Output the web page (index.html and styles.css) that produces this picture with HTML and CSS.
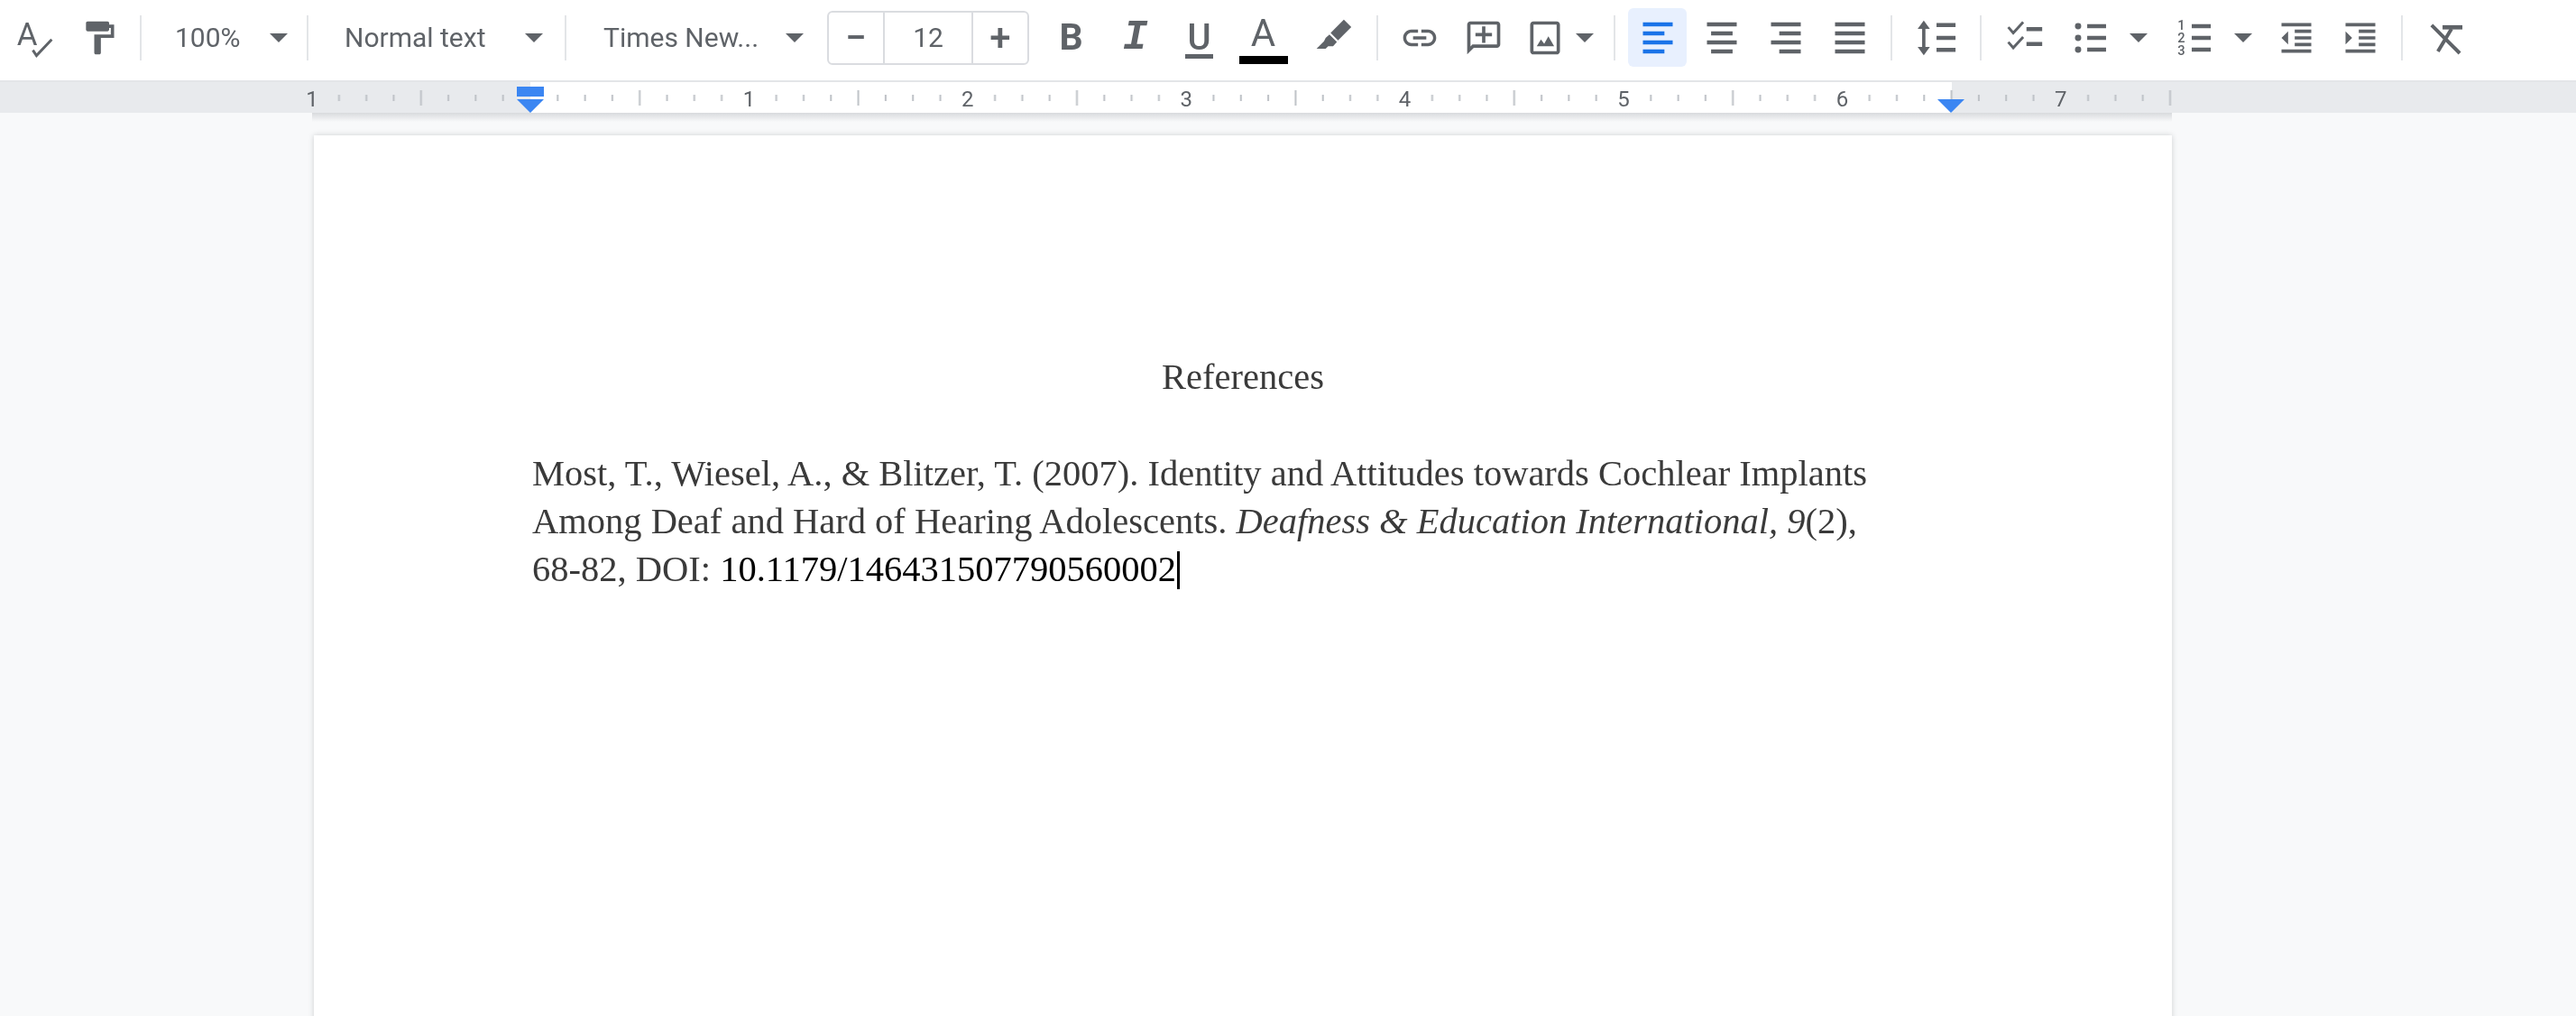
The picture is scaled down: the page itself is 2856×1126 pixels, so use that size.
FILE: index.html
```html
<!DOCTYPE html>
<html lang="en">
<head>
    <meta charset="UTF-8">
    <title>References - Docs</title>
    <link rel="stylesheet" href="styles.css">
</head>
<body>
    <div class="toolbar">
        <div class="btn btn-first">
            <svg class="icon" viewBox="0 0 24 24"><text class="spell-a" x="1" y="16.6">A</text><path class="line line-thin" d="M10.6 19.4l2.2 3.3L22 12.9"/></svg>
        </div>
        <div class="btn">
            <svg class="icon" viewBox="0 0 24 24"><path d="M18 4V3c0-.55-.45-1-1-1H5c-.55 0-1 .45-1 1v4c0 .55.45 1 1 1h12c.55 0 1-.45 1-1V6h1v4H9v11c0 .55.45 1 1 1h2c.55 0 1-.45 1-1v-9h8V4h-3z"/></svg>
        </div>
        <div class="sep ml-10"></div>

        <div class="select select-zoom"><span>100%</span><i class="caret"></i></div>
        <div class="sep"></div>
        <div class="select select-style"><span>Normal text</span><i class="caret"></i></div>
        <div class="sep"></div>
        <div class="select select-font"><span>Times New...</span><i class="caret"></i></div>

        <div class="stepper">
            <div class="step">&minus;</div>
            <div class="step-value">12</div>
            <div class="step">+</div>
        </div>

        <div class="btn ml-11 letter letter-b">B</div>
        <div class="btn letter letter-i">I</div>
        <div class="btn letter letter-u"><span>U</span><b class="u-bar"></b></div>
        <div class="btn letter letter-a"><span>A</span><b class="a-bar"></b></div>
        <div class="btn ml-6">
            <svg class="icon" viewBox="0 0 24 24"><path d="M18.5 1L23 5.5 15 13.5 10.5 9zM9.8 10l4.5 4.5-2.3 2.5H9l-1.5 1.5H2L6.5 14l1-2z"/></svg>
        </div>
        <div class="sep ml-13"></div>

        <div class="btn ml-10">
            <svg class="icon" viewBox="0 0 24 24"><path d="M3.9 12c0-1.71 1.39-3.1 3.1-3.1h4V7H7c-2.76 0-5 2.24-5 5s2.24 5 5 5h4v-1.9H7c-1.71 0-3.1-1.39-3.1-3.1zM8 13h8v-2H8v2zm9-6h-4v1.9h4c1.71 0 3.1 1.39 3.1 3.1s-1.39 3.1-3.1 3.1h-4V17h4c2.76 0 5-2.24 5-5s-2.24-5-5-5z"/></svg>
        </div>
        <div class="btn">
            <svg class="icon" viewBox="0 0 24 24"><g transform="matrix(-1 0 0 1 24 0)"><path d="M22 4c0-1.1-.9-2-2-2H4c-1.1 0-2 .9-2 2v12c0 1.1.9 2 2 2h14l4 4V4zm-2 13.17L18.83 16H4V4h16v13.17z"/></g><path d="M13 5h-2v4H7v2h4v4h2v-4h4V9h-4z"/></svg>
        </div>
        <div class="btn btn-image">
            <svg class="icon" viewBox="0 0 24 24"><path d="M19 4v16H5V4h14m0-2H5c-1.1 0-2 .9-2 2v16c0 1.1.9 2 2 2h14c1.1 0 2-.9 2-2V4c0-1.1-.9-2-2-2z"/><path d="M7 17l2.5-4 2 2.5 2.5-4.5 3.5 6z"/></svg>
        </div>
        <div class="btn-caret"><i class="caret"></i></div>
        <div class="sep ml-20"></div>

        <div class="btn btn-active ml-14">
            <svg class="icon icon-blue" viewBox="0 0 24 24"><path d="M3 2.6h18V5H3zM3 8.1h13v2.4H3zM3 13.5h18v2.4H3zM3 19h13v2.4H3z"/></svg>
        </div>
        <div class="btn ml-3">
            <svg class="icon" viewBox="0 0 24 24"><path d="M3 2.6h18V5H3zM5.5 8.1h13v2.4h-13zM3 13.5h18v2.4H3zM5.5 19h13v2.4h-13z"/></svg>
        </div>
        <div class="btn">
            <svg class="icon" viewBox="0 0 24 24"><path d="M3 2.6h18V5H3zM8 8.1h13v2.4H8zM3 13.5h18v2.4H3zM8 19h13v2.4H8z"/></svg>
        </div>
        <div class="btn">
            <svg class="icon" viewBox="0 0 24 24"><path d="M3 2.6h18V5H3zM3 8.1h18v2.4H3zM3 13.5h18v2.4H3zM3 19h18v2.4H3z"/></svg>
        </div>
        <div class="sep ml-10"></div>

        <div class="btn ml-13">
            <svg class="icon" viewBox="0 0 24 24"><path d="M5.3 6.5H8L4.3 1.5.6 6.5h2.7v11H.6l3.7 5 3.7-5H5.3zM12 3h11.5v2.4H12zM12 10.8h11.5v2.4H12zM12 18h11.5v2.4H12z"/></svg>
        </div>
        <div class="sep ml-13"></div>

        <div class="btn ml-11">
            <svg class="icon" viewBox="0 0 24 24"><path class="line line-thin" d="M2.5 5.5l3 3.5 6-6.5M2.5 14.5l3 3.5 6-6.5"/><path d="M13.5 5.5H23v2.4h-9.5zM13.5 14.5H23v2.4h-9.5z"/></svg>
        </div>
        <div class="btn ml-2">
            <svg class="icon" viewBox="0 0 24 24"><circle cx="4.9" cy="4.9" r="1.9"/><circle cx="4.9" cy="12" r="1.9"/><circle cx="4.9" cy="19.1" r="1.9"/><path d="M10.4 3.7h11.4v2.4H10.4zM10.4 10.8h11.4v2.4H10.4zM10.4 17.9h11.4v2.4H10.4z"/></svg>
        </div>
        <div class="btn-caret ml-7"><i class="caret"></i></div>
        <div class="btn ml-15">
            <svg class="icon" viewBox="0 0 24 24"><text class="num" x="3.5" y="7">1</text><text class="num" x="3.5" y="14.7">2</text><text class="num" x="3.5" y="22.3">3</text><path d="M9.8 3.7h11.5v2.4H9.8zM9.8 10.8h11.5v2.4H9.8zM9.8 17.9h11.5v2.4H9.8z"/></svg>
        </div>
        <div class="btn-caret ml-6"><i class="caret"></i></div>
        <div class="btn ml-11">
            <svg class="icon" viewBox="0 0 24 24"><path d="M11 17h10v-2H11v2zm-8-5l4 4V8l-4 4zm0 9h18v-2H3v2zM3 3v2h18V3H3zm8 6h10V7H11v2zm0 4h10v-2H11v2z"/></svg>
        </div>
        <div class="btn">
            <svg class="icon" viewBox="0 0 24 24"><path d="M3 21h18v-2H3v2zM3 8v8l4-4-4-4zm8 9h10v-2H11v2zM3 3v2h18V3H3zm8 6h10V7H11v2zm0 4h10v-2H11v2z"/></svg>
        </div>
        <div class="sep ml-10"></div>
        <div class="btn ml-13">
            <svg class="icon" viewBox="0 0 24 24"><path class="line" d="M2.7 4.3l17 17M14.7 6.5L6.5 20.2"/><path d="M9.3 4.3h12v2.6h-12z"/></svg>
        </div>
    </div>

    <div class="ruler">
        <svg class="ruler-marks" width="2856" height="34" viewBox="0 0 2856 34">
            <defs>
                <pattern id="inch" x="588" y="0" width="242.4" height="34" patternUnits="userSpaceOnUse">
                    <path class="tick" d="M30.3 14v7M60.6 14v7M90.9 14v7M121.2 9v17M151.5 14v7M181.8 14v7M212.1 14v7"/>
                </pattern>
            </defs>
            <rect class="ruler-paper" x="588" y="0" width="1576" height="34"/>
            <rect x="346" y="0" width="2062" height="34" fill="url(#inch)"/>
            <text class="ruler-num" x="346" y="27">1</text>
            <text class="ruler-num" x="830.4" y="27">1</text>
            <text class="ruler-num" x="1072.8" y="27">2</text>
            <text class="ruler-num" x="1315.2" y="27">3</text>
            <text class="ruler-num" x="1557.6" y="27">4</text>
            <text class="ruler-num" x="1800" y="27">5</text>
            <text class="ruler-num" x="2042.4" y="27">6</text>
            <text class="ruler-num" x="2284.8" y="27">7</text>
            <path class="marker" d="M573 5h30v11h-30zM573 19h30l-15 15zM2148 19h30l-15 15z"/>
        </svg>
    </div>

    <div class="canvas">
        <div class="ruler-shade"></div>
        <div class="page">
            <p class="title">References</p>
            <p class="blank">&nbsp;</p>
            <p class="ref">Most, T., Wiesel, A., &amp; Blitzer, T. (2007). Identity and Attitudes towards Cochlear Implants Among Deaf and Hard of Hearing Adolescents. <em>Deafness &amp; Education International, 9</em>(2), <span class="nowrap">68-82,</span> DOI: <span class="doi">10.1179/146431507790560002</span><span class="cursor"></span></p>
        </div>
    </div>
</body>
</html>
```

FILE: styles.css
```css
*{
    margin: 0;
    padding: 0;
    box-sizing: border-box;
}
body{
    width: 2856px;
    height: 1126px;
    overflow: hidden;
    background-color: #f8f9fa;
    font-family: Roboto, sans-serif;
    color: #5f6368;
}

/* toolbar */
.toolbar{
    display: flex;
    align-items: center;
    height: 91px;
    padding-left: 3px;
    padding-bottom: 6px;
    background-color: #fff;
    border-bottom: 2px solid #e3e5e8;
    filter: blur(0.5px);
}
.btn{
    flex: none;
    display: flex;
    align-items: center;
    justify-content: center;
    width: 71px;
    height: 65px;
    border-radius: 6px;
}
.btn-image{
    width: 65px;
}
.btn-active{
    width: 65px;
    background-color: #e8f0fe;
}
.btn-caret{
    flex: none;
    display: flex;
    justify-content: center;
    width: 24px;
}
.icon{
    width: 44px;
    height: 44px;
    fill: #5f6368;
    overflow: visible;
}
.icon-blue{
    fill: #1a73e8;
}
.line{
    fill: none;
    stroke: #5f6368;
    stroke-width: 2.2;
}
.line-thin{
    stroke-width: 1.6;
}
.spell-a{
    font-size: 19px;
    font-family: Roboto, sans-serif;
}
.num{
    font-size: 8px;
    font-weight: 500;
    font-family: Roboto, sans-serif;
    text-anchor: middle;
}
.sep{
    flex: none;
    width: 2px;
    height: 50px;
    background-color: #e3e5e8;
}
.caret{
    display: block;
    width: 0;
    height: 0;
    border-left: 10px solid transparent;
    border-right: 10px solid transparent;
    border-top: 10px solid #5f6368;
}
.select{
    flex: none;
    display: flex;
    align-items: center;
    justify-content: space-between;
    font-size: 30px;
}
.select-zoom{
    width: 183px;
    padding: 0 21px 0 37px;
}
.select-style{
    width: 284px;
    padding: 0 24px 0 40px;
}
.select-font{
    width: 289px;
    padding: 0 26px 0 41px;
}
.stepper{
    flex: none;
    display: flex;
    width: 224px;
    height: 60px;
    border: 2px solid #dadce0;
    border-radius: 6px;
}
.step{
    display: flex;
    align-items: center;
    justify-content: center;
    width: 60px;
    font-size: 42px;
    font-weight: 500;
}
.step-value{
    display: flex;
    align-items: center;
    justify-content: center;
    flex: 1;
    font-size: 30px;
    border-left: 2px solid #dadce0;
    border-right: 2px solid #dadce0;
}
.letter{
    line-height: 1;
}
.letter-b{
    font-size: 41px;
    font-weight: 700;
}
.letter-i{
    font-family: "Liberation Mono", monospace;
    font-size: 46px;
    font-weight: 700;
    font-style: italic;
}
.letter-u,
.letter-a{
    flex-direction: column;
    justify-content: flex-start;
}
.letter-u{
    font-size: 40px;
    font-weight: 500;
    padding-top: 16px;
}
.letter-a{
    font-size: 42px;
    padding-top: 11px;
}
.letter-u span,
.letter-a span{
    height: 34px;
    line-height: 34px;
}
.u-bar{
    width: 31px;
    height: 5px;
    background-color: #5f6368;
    margin-top: 1px;
}
.a-bar{
    width: 54px;
    height: 9px;
    background-color: #000;
    margin-top: 8px;
}
.ml-2{ margin-left: 2px; }
.ml-3{ margin-left: 3px; }
.ml-6{ margin-left: 6px; }
.ml-7{ margin-left: 7px; }
.ml-10{ margin-left: 10px; }
.ml-11{ margin-left: 11px; }
.ml-13{ margin-left: 13px; }
.ml-14{ margin-left: 14px; }
.ml-15{ margin-left: 15px; }
.ml-20{ margin-left: 20px; }

/* ruler */
.ruler{
    height: 34px;
    background-color: #e8eaed;
    filter: blur(0.5px);
}
.ruler-marks{
    display: block;
}
.ruler-paper{
    fill: #fff;
}
.tick{
    fill: none;
    stroke: #bdc1c6;
    stroke-width: 2;
}
.ruler-num{
    font-family: Roboto, sans-serif;
    font-size: 24px;
    fill: #5f6368;
    text-anchor: middle;
}
.marker{
    fill: #3b86f2;
}

/* document */
.canvas{
    height: 1001px;
    overflow: hidden;
}
.ruler-shade{
    width: 2062px;
    height: 10px;
    margin-left: 346px;
    background: linear-gradient(#d8dadd, #f8f9fa);
}
.page{
    width: 2060px;
    height: 1400px;
    margin: 15px 0 0 348px;
    padding: 241px 242px 0;
    background-color: #fff;
    box-shadow: 0 0 6px rgba(60, 64, 67, 0.22);
    font-family: "Liberation Serif", "Times New Roman", serif;
    font-size: 40.5px;
    line-height: 53.3px;
    color: #3a3a3a;
    filter: blur(0.5px);
}
.title{
    text-align: center;
}
.nowrap{
    white-space: nowrap;
}
.doi{
    color: #000;
}
.cursor{
    display: inline-block;
    width: 3px;
    height: 42px;
    margin-left: 1px;
    vertical-align: -9px;
    background-color: #000;
}
```
